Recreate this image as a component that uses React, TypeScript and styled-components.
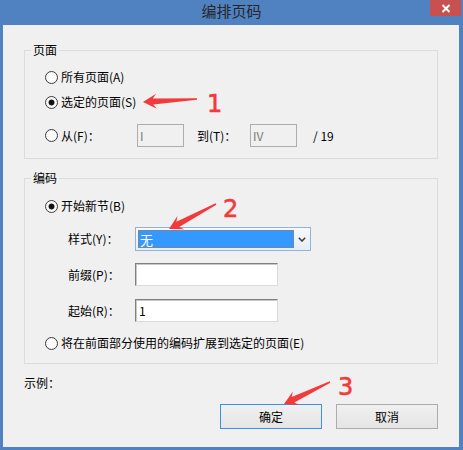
import React from 'react';
import styled, { createGlobalStyle } from 'styled-components';

const GlobalStyle = createGlobalStyle`
  html, body { margin: 0; padding: 0; background: #ffffff; }
  body { font-family: "Noto Sans CJK SC", "Noto Sans", sans-serif; }
  * { box-sizing: border-box; }
`;

const Window = styled.div`
  position: relative;
  width: 463px;
  height: 450px;
  background: #5082c2;
  display: flex;
  flex-direction: column;
  overflow: hidden;
`;

const TitleBar = styled.div`
  height: 25px;
  flex: none;
  display: grid;
  grid-template-columns: 1fr auto 1fr;
`;

const Title = styled.div`
  grid-column: 2;
  font-size: 15px;
  line-height: 21px;
  color: #262626;
`;

const CloseButton = styled.div`
  grid-column: 3;
  justify-self: end;
  align-self: start;
  width: 31px;
  height: 16px;
  margin-right: 2px;
  background: #c75050;
  display: flex;
  align-items: center;
  justify-content: center;
`;

const Client = styled.div`
  flex: 1;
  margin: 0 4px 3px 3px;
  background: #f0f0f0;
  display: flex;
  flex-direction: column;
  padding: 18px 21px 0 21px;
`;

const Group = styled.fieldset<{ $mt?: number }>`
  margin: ${p => p.$mt ?? 0}px 0 0 0;
  padding: 0;
  border: 1px solid #dcdcdc;
  min-width: 0;
`;

const Legend = styled.legend`
  margin-left: 6px;
  padding: 0 2px;
  font-size: 12px;
  line-height: 14px;
  color: #000;
`;

const GroupBody = styled.div<{ $pt: number; $pb: number }>`
  display: flex;
  flex-direction: column;
  padding: ${p => p.$pt}px 0 ${p => p.$pb}px 20px;
`;

const Row = styled.div<{ $h: number; $mt?: number; $indent?: number }>`
  display: flex;
  align-items: center;
  height: ${p => p.$h}px;
  margin-top: ${p => p.$mt ?? 0}px;
  padding-left: ${p => p.$indent ?? 0}px;
`;

const RadioLabel = styled.div<{ $w?: number }>`
  display: flex;
  align-items: center;
  gap: 3px;
  ${p => (p.$w ? `width: ${p.$w}px;` : '')}
  flex: none;
`;

const RadioCircle = styled.span<{ $checked?: boolean }>`
  width: 13px;
  height: 13px;
  border-radius: 50%;
  border: 1px solid #3c3c3c;
  flex: none;
  background: ${p =>
    p.$checked
      ? 'radial-gradient(circle, #111 0 2.6px, #f4f4f4 3.3px, #ffffff 100%)'
      : 'radial-gradient(circle, #ffffff 0, #f7f7f7 70%, #e8e8e8 100%)'};
`;

const Text = styled.span<{ $w?: number; $ml?: number }>`
  font-size: 12px;
  line-height: 16px;
  color: #000;
  white-space: nowrap;
  ${p => (p.$w ? `width: ${p.$w}px; flex: none;` : '')}
  margin-left: ${p => p.$ml ?? 0}px;
`;

const DisabledBox = styled.div<{ $w: number }>`
  width: ${p => p.$w}px;
  height: 23px;
  flex: none;
  background: #f0f0f0;
  border: 1px solid #adadad;
  font-size: 12px;
  color: #7a7a7a;
  padding-left: 2px;
  display: flex;
  align-items: center;
`;

const TextBox = styled.div<{ $w: number }>`
  width: ${p => p.$w}px;
  height: 23px;
  flex: none;
  background: #ffffff;
  border: 1px solid;
  border-color: #7f7f7f #dadada #dadada #7f7f7f;
  box-shadow: inset 1px 1px 0 #c8c8c8;
  font-size: 12px;
  color: #000;
  padding-left: 3px;
  display: flex;
  align-items: center;
`;

const Select = styled.div`
  width: 176px;
  height: 24px;
  flex: none;
  border: 1px solid #8fb4dc;
  background: linear-gradient(#f7f9fc, #e6edf5);
  padding: 2px 0 2px 2px;
  display: flex;
`;

const SelectValue = styled.div`
  flex: 1;
  background: #3399ff;
  color: #ffffff;
  outline: 1px dotted #b8743a;
  outline-offset: -1px;
  font-size: 13px;
  padding-left: 2px;
  display: flex;
  align-items: center;
`;

const SelectArrow = styled.div`
  width: 16px;
  flex: none;
  display: flex;
  align-items: center;
  justify-content: center;
`;

const Example = styled.div`
  font-size: 12px;
  line-height: 16px;
  margin-top: 11px;
  color: #000;
`;

const ButtonRow = styled.div`
  display: flex;
  justify-content: flex-end;
  gap: 14px;
  margin-top: 13px;
`;

const Button = styled.button<{ $primary?: boolean }>`
  width: 102px;
  height: 25px;
  border: 1px solid ${p => (p.$primary ? '#3d8ee6' : '#acacac')};
  background: linear-gradient(#f0f0f0, #e5e5e5);
  font-family: "Noto Sans CJK SC", sans-serif;
  font-size: 12px;
  color: #000;
  padding: 0;
  margin: 0;
`;

const Overlay = styled.svg`
  position: absolute;
  left: 0;
  top: 0;
  width: 463px;
  height: 450px;
  pointer-events: none;
`;

const Mark = styled.span<{ $x: number; $y: number }>`
  position: absolute;
  left: ${p => p.$x}px;
  top: ${p => p.$y}px;
  font-family: "DejaVu Sans", "Liberation Sans", sans-serif;
  font-size: 24px;
  line-height: 24px;
  font-weight: 400;
  color: #f23a3a;
  -webkit-text-stroke: 0.6px #f23a3a;
`;

type Pt = [number, number];

function arrowPoints(tail: Pt, tip: Pt, headLen = 12, headHalf = 7.5, shaftHalf = 3, tailHalf = 0.8): string {
  const dx = tip[0] - tail[0];
  const dy = tip[1] - tail[1];
  const L = Math.hypot(dx, dy);
  const ux = dx / L, uy = dy / L;
  const nx = -uy, ny = ux;
  const bx = tip[0] - ux * (headLen - 2), by = tip[1] - uy * (headLen - 2);
  const wx = tip[0] - ux * (headLen + 1.5), wy = tip[1] - uy * (headLen + 1.5);
  const pts: Pt[] = [
    [tail[0] + nx * tailHalf, tail[1] + ny * tailHalf],
    [bx + nx * shaftHalf, by + ny * shaftHalf],
    [wx + nx * headHalf, wy + ny * headHalf],
    tip,
    [wx - nx * headHalf, wy - ny * headHalf],
    [bx - nx * shaftHalf, by - ny * shaftHalf],
    [tail[0] - nx * tailHalf, tail[1] - ny * tailHalf],
  ];
  return pts.map(p => `${p[0].toFixed(1)},${p[1].toFixed(1)}`).join(' ');
}

const Radio: React.FC<{ checked?: boolean; label: string; w?: number }> = ({ checked, label, w }) => (
  <RadioLabel $w={w}>
    <RadioCircle $checked={checked} />
    <Text>{label}</Text>
  </RadioLabel>
);

export default function App() {
  return (
    <>
      <GlobalStyle />
      <Window>
        <TitleBar>
          <Title>编排页码</Title>
          <CloseButton>
            <svg width="10" height="9" viewBox="0 0 10 9">
              <path d="M1.5 1 L8.5 8 M8.5 1 L1.5 8" stroke="#ffffff" strokeWidth="2" />
            </svg>
          </CloseButton>
        </TitleBar>
        <Client>
          <Group>
            <Legend>页面</Legend>
            <GroupBody $pt={10} $pb={11}>
              <Row $h={20}>
                <Radio label="所有页面(A)" />
              </Row>
              <Row $h={20} $mt={5}>
                <Radio checked label="选定的页面(S)" />
              </Row>
              <Row $h={23} $mt={12}>
                <Radio label="从(F)：" w={92} />
                <DisabledBox $w={47}>I</DisabledBox>
                <Text $w={53} $ml={13}>到(T)：</Text>
                <DisabledBox $w={47}>IV</DisabledBox>
                <Text $ml={16}>/ 19</Text>
              </Row>
            </GroupBody>
          </Group>
          <Group $mt={12}>
            <Legend>编码</Legend>
            <GroupBody $pt={11} $pb={10}>
              <Row $h={20}>
                <Radio checked label="开始新节(B)" />
              </Row>
              <Row $h={24} $mt={11} $indent={23}>
                <Text $w={67}>样式(Y)：</Text>
                <Select>
                  <SelectValue>无</SelectValue>
                  <SelectArrow>
                    <svg width="8" height="5" viewBox="0 0 8 5">
                      <path d="M0.8 0.8 L4 4 L7.2 0.8" stroke="#404040" strokeWidth="1.6" fill="none" />
                    </svg>
                  </SelectArrow>
                </Select>
              </Row>
              <Row $h={23} $mt={12} $indent={23}>
                <Text $w={67}>前缀(P)：</Text>
                <TextBox $w={143} />
              </Row>
              <Row $h={23} $mt={13} $indent={23}>
                <Text $w={67}>起始(R)：</Text>
                <TextBox $w={143}>1</TextBox>
              </Row>
              <Row $h={20} $mt={11}>
                <Radio label="将在前面部分使用的编码扩展到选定的页面(E)" />
              </Row>
            </GroupBody>
          </Group>
          <Example>示例：</Example>
          <ButtonRow>
            <Button $primary>确定</Button>
            <Button>取消</Button>
          </ButtonRow>
        </Client>
        <Overlay viewBox="0 0 463 450">
          <polygon points={arrowPoints([197, 99], [143, 102])} fill="#f23a3a" />
          <polygon points={arrowPoints([216, 204], [169, 229])} fill="#f23a3a" />
          <polygon points={arrowPoints([330, 382], [284, 404])} fill="#f23a3a" />
        </Overlay>
        <Mark $x={207} $y={92}>1</Mark>
        <Mark $x={223} $y={197}>2</Mark>
        <Mark $x={338} $y={375}>3</Mark>
      </Window>
    </>
  );
}
